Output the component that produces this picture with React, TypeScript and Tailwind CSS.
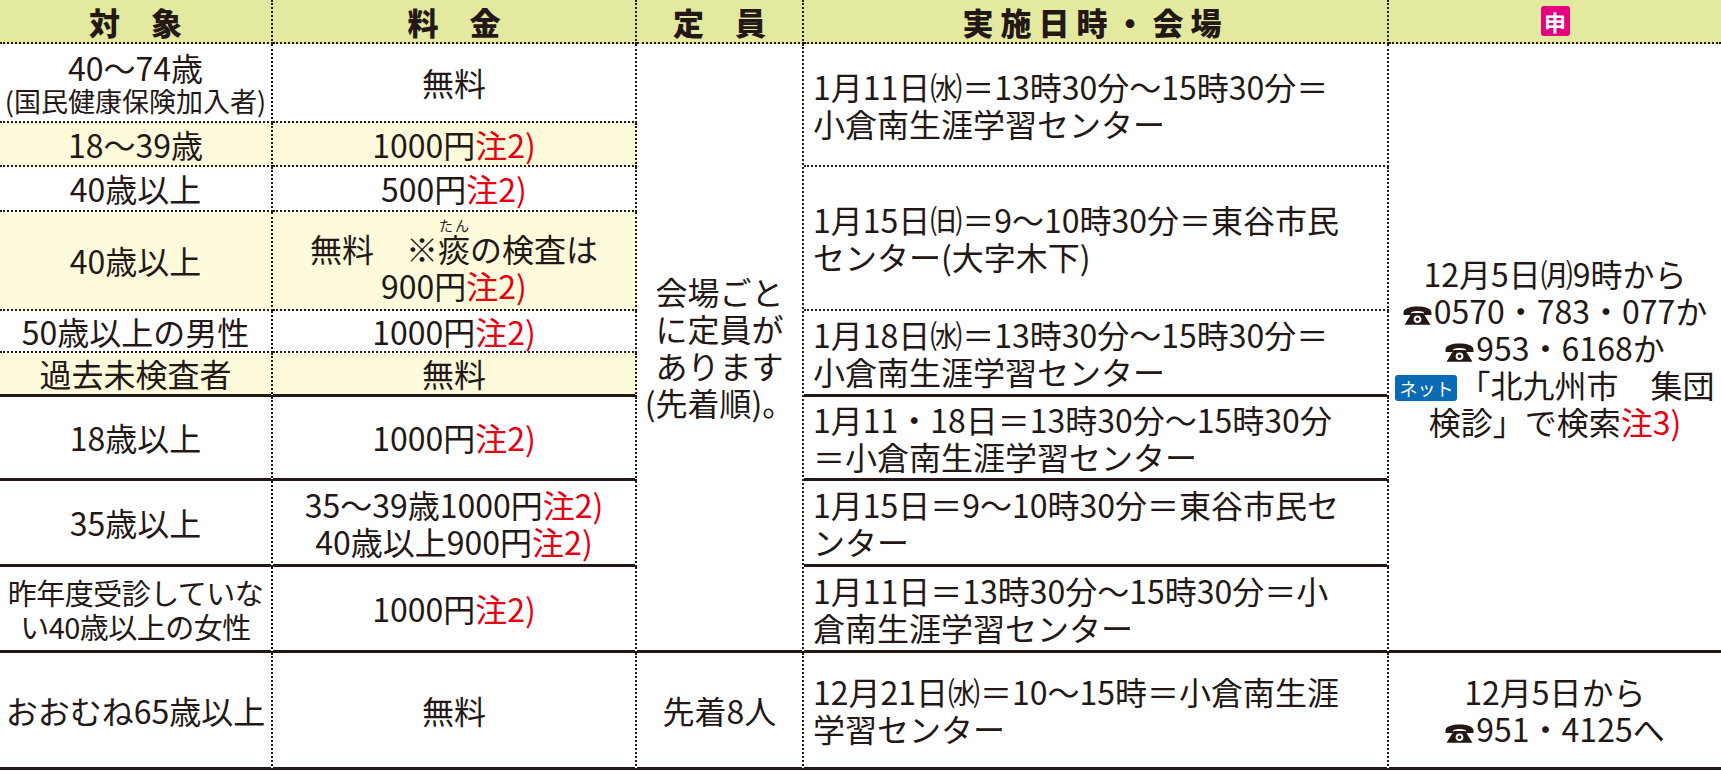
import type { ReactNode } from "react";

// 罫線: 縦は点線、横は点線か実線
const vr = "[border-right:2px_dotted_#231815]";
const bd = "[border-bottom:2px_dotted_#231815]";
const bs = "[border-bottom:3px_solid_#231815]";
const cream = "bg-[#fefadc]";
const head =
  "bg-[#e3eaa0] flex items-center justify-center text-[31px] font-black leading-none";
const mid = "flex items-center justify-center text-center";
const left = "flex items-center pl-[9px] text-left";

function Chu({ n = 2 }: { n?: number }) {
  return <span className="text-[#e60012]">注{n})</span>;
}

// 電話マーク
function Tel() {
  return (
    <svg viewBox="0 0 28 20" className="mr-[2px] inline-block h-[21px] w-[29px] align-[-1px]" fill="#231815">
      <path d="M0.5 8C0.5 0.3 27.5 0.3 27.5 8V10.5H20V7.6C16 6.4 12 6.4 8 7.6V10.5H0.5Z" />
      <path d="M8.5 8.5H19.5L26.5 19.8H1.5Z" />
      <circle cx="14" cy="14.6" r="3.7" fill="#fff" />
      <circle cx="14" cy="14.6" r="1.7" />
    </svg>
  );
}

type Row = {
  r: string;
  bg?: boolean;
  line: string;
  who: ReactNode;
  fee: ReactNode;
};

const rows: Row[] = [
  {
    r: "row-start-2",
    line: bd,
    who: (
      <span>
        40～74歳
        <br />
        <span className="block text-[27px] leading-[30px]">(国民健康保険加入者)</span>
      </span>
    ),
    fee: "無料",
  },
  { r: "row-start-3", bg: true, line: bd, who: "18～39歳", fee: <>1000円<Chu /></> },
  { r: "row-start-4", line: bd, who: "40歳以上", fee: <>500円<Chu /></> },
  {
    r: "row-start-5",
    bg: true,
    line: bd,
    who: "40歳以上",
    fee: (
      <span>
        無料　※
        <ruby>
          痰<rt className="text-[14px]">たん</rt>
        </ruby>
        の検査は
        <br />
        900円<Chu />
      </span>
    ),
  },
  { r: "row-start-6", line: bd, who: "50歳以上の男性", fee: <>1000円<Chu /></> },
  { r: "row-start-7", bg: true, line: bs, who: "過去未検査者", fee: "無料" },
  { r: "row-start-8", line: bs, who: "18歳以上", fee: <>1000円<Chu /></> },
  {
    r: "row-start-9",
    line: bs,
    who: "35歳以上",
    fee: (
      <span>
        35～39歳1000円<Chu />
        <br />
        40歳以上900円<Chu />
      </span>
    ),
  },
  {
    r: "row-start-10",
    line: bs,
    who: (
      <span className="text-[29px] leading-[34px] tracking-[-0.5px]">
        昨年度受診していな
        <br />
        い40歳以上の女性
      </span>
    ),
    fee: <>1000円<Chu /></>,
  },
  { r: "row-start-11", line: bs, who: "おおむね65歳以上", fee: "無料" },
];

export default function App() {
  return (
    <div className="w-[1721px] h-[772px] bg-white text-[#231815] font-['Noto_Sans_CJK_JP',sans-serif]">
      <div className="grid grid-cols-[273px_364px_167px_585px_332px] grid-rows-[44px_79px_44px_45px_99px_42px_44px_84px_86px_86px_117px] text-[32px] leading-[37px]">
        {/* 見出し */}
        <div className={`col-start-1 row-start-1 ${head} ${vr} ${bd}`}>対　象</div>
        <div className={`col-start-2 row-start-1 ${head} ${vr} ${bd}`}>料　金</div>
        <div className={`col-start-3 row-start-1 ${head} ${vr} ${bd}`}>定　員</div>
        <div className={`col-start-4 row-start-1 ${head} ${vr} ${bd} tracking-[7px]`}>
          実施日時・会場
        </div>
        <div className={`col-start-5 row-start-1 ${head} ${bd}`}>
          <span className="inline-flex h-[30px] w-[29px] items-center justify-center rounded-[3px] bg-[#e4007f] text-[22px] font-bold text-white">
            申
          </span>
        </div>

        {/* 対象・料金 */}
        {rows.map((row) => (
          <div key={row.r} className="contents">
            <div className={`col-start-1 ${row.r} ${mid} ${vr} ${row.line} ${row.bg ? cream : ""}`}>
              {row.who}
            </div>
            <div className={`col-start-2 ${row.r} ${mid} ${vr} ${row.line} ${row.bg ? cream : ""}`}>
              {row.fee}
            </div>
          </div>
        ))}

        {/* 定員 */}
        <div className={`col-start-3 row-start-2 row-span-9 ${mid} ${vr} ${bs}`}>
          <span>
            会場ごと
            <br />
            に定員が
            <br />
            あります
            <br />
            (先着順)。
          </span>
        </div>
        <div className={`col-start-3 row-start-11 ${mid} ${vr} ${bs}`}>先着8人</div>

        {/* 実施日時・会場 */}
        <div className={`col-start-4 row-start-2 row-span-2 ${left} ${vr} ${bd}`}>
          <span>
            1月11日㈬＝13時30分～15時30分＝
            <br />
            小倉南生涯学習センター
          </span>
        </div>
        <div className={`col-start-4 row-start-4 row-span-2 ${left} ${vr} ${bd}`}>
          <span>
            1月15日㈰＝9～10時30分＝東谷市民
            <br />
            センター(大字木下)
          </span>
        </div>
        <div className={`col-start-4 row-start-6 row-span-2 ${left} ${vr} ${bs}`}>
          <span>
            1月18日㈬＝13時30分～15時30分＝
            <br />
            小倉南生涯学習センター
          </span>
        </div>
        <div className={`col-start-4 row-start-8 ${left} ${vr} ${bs}`}>
          <span>
            1月11・18日＝13時30分～15時30分
            <br />
            ＝小倉南生涯学習センター
          </span>
        </div>
        <div className={`col-start-4 row-start-9 ${left} ${vr} ${bs}`}>
          <span>
            1月15日＝9～10時30分＝東谷市民セ
            <br />
            ンター
          </span>
        </div>
        <div className={`col-start-4 row-start-10 ${left} ${vr} ${bs}`}>
          <span>
            1月11日＝13時30分～15時30分＝小
            <br />
            倉南生涯学習センター
          </span>
        </div>
        <div className={`col-start-4 row-start-11 ${left} ${vr} ${bs}`}>
          <span>
            12月21日㈬＝10～15時＝小倉南生涯
            <br />
            学習センター
          </span>
        </div>

        {/* 申し込み */}
        <div className={`col-start-5 row-start-2 row-span-9 ${mid} ${bs}`}>
          <span>
            12月5日㈪9時から
            <br />
            <Tel />0570・783・077か
            <br />
            <Tel />953・6168か
            <br />
            <span className="mr-[1px] inline-flex h-[26px] items-center whitespace-nowrap rounded-[3px] bg-[#0a6ab4] px-[4px] align-[2px] text-[18px] leading-none text-white">
              ネット
            </span>
            「北九州市　集団
            <br />
            検診」で検索<Chu n={3} />
          </span>
        </div>
        <div className={`col-start-5 row-start-11 ${mid} ${bs}`}>
          <span>
            12月5日から
            <br />
            <Tel />951・4125へ
          </span>
        </div>
      </div>
    </div>
  );
}
